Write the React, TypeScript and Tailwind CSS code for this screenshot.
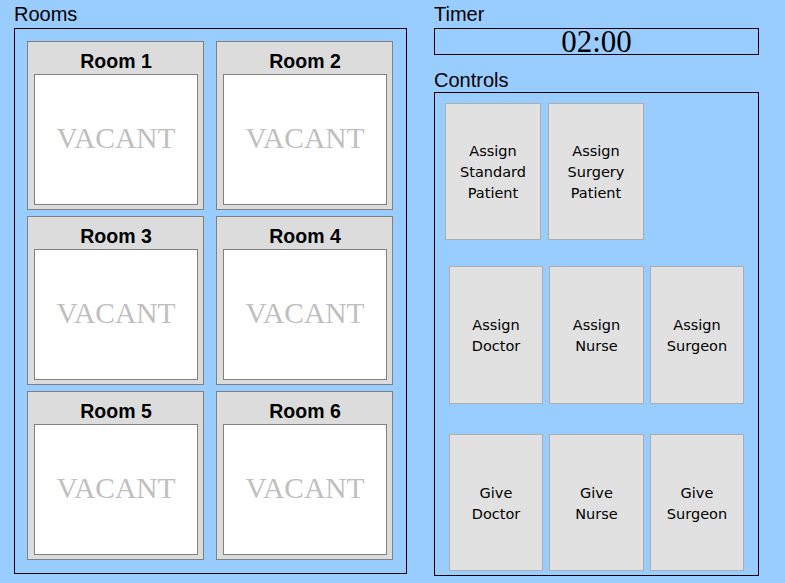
import React from 'react';

const rooms = ['Room 1', 'Room 2', 'Room 3', 'Room 4', 'Room 5', 'Room 6'];

const RoomCard: React.FC<{ name: string }> = ({ name }) => (
  <div className="w-[177px] h-[169px] border border-[#808080] bg-[#dcdcdc] flex flex-col pl-[6px] pr-[5px] pb-[4px]">
    <div className="h-[32px] pt-[8px] leading-[22px] text-[19.5px] font-bold text-center text-black">{name}</div>
    <div className="flex-1 border border-[#808080] bg-white flex items-center justify-center pb-[3px]">
      <span className="font-['Liberation_Serif',serif] text-[29.5px] text-[#bfbfbf]">VACANT</span>
    </div>
  </div>
);

const ControlButton: React.FC<{ lines: string[]; className: string }> = ({ lines, className }) => (
  <button
    className={`${className} border border-[#adadad] bg-[#e1e1e1] flex flex-col items-center justify-center pt-[2px] font-['DejaVu_Sans',sans-serif] text-[14.5px] leading-[21px] text-black`}
  >
    {lines.map((l) => (
      <span key={l}>{l}</span>
    ))}
  </button>
);

export default function App() {
  return (
    <div className="w-full min-h-screen bg-[#99ccff] flex gap-[27px] pl-[14px] font-['Liberation_Sans',Arial,sans-serif] text-black">
      <div className="w-[393px] flex flex-col">
        <div className="h-[28px] leading-[28px] text-[20px]">Rooms</div>
        <div className="h-[546px] border border-black pl-[12px] pt-[12px]">
          <div className="grid grid-cols-[177px_177px] gap-x-[12px] gap-y-[6px]">
            {rooms.map((r) => (
              <RoomCard key={r} name={r} />
            ))}
          </div>
        </div>
      </div>

      <div className="w-[325px] flex flex-col">
        <div className="h-[28px] leading-[28px] text-[20px]">Timer</div>
        <div className="h-[27px] border border-black flex items-center justify-center font-['Liberation_Serif',serif] text-[31px] leading-none">
          02:00
        </div>
        <div className="mt-[11px] h-[26px] leading-[28px] text-[20px]">Controls</div>
        <div className="h-[484px] border border-black flex flex-col">
          <div className="flex gap-[7px] pl-[10px] pt-[10px]">
            <ControlButton className="w-[96px] h-[137px]" lines={['Assign', 'Standard', 'Patient']} />
            <ControlButton className="w-[96px] h-[137px]" lines={['Assign', 'Surgery', 'Patient']} />
          </div>
          <div className="flex gap-[6px] pl-[14px] mt-[26px]">
            <ControlButton className="w-[94px] h-[138px]" lines={['Assign', 'Doctor']} />
            <ControlButton className="w-[95px] h-[138px]" lines={['Assign', 'Nurse']} />
            <ControlButton className="w-[94px] h-[138px]" lines={['Assign', 'Surgeon']} />
          </div>
          <div className="flex gap-[6px] pl-[14px] mt-[30px]">
            <ControlButton className="w-[94px] h-[137px]" lines={['Give', 'Doctor']} />
            <ControlButton className="w-[95px] h-[137px]" lines={['Give', 'Nurse']} />
            <ControlButton className="w-[94px] h-[137px]" lines={['Give', 'Surgeon']} />
          </div>
        </div>
      </div>
    </div>
  );
}
